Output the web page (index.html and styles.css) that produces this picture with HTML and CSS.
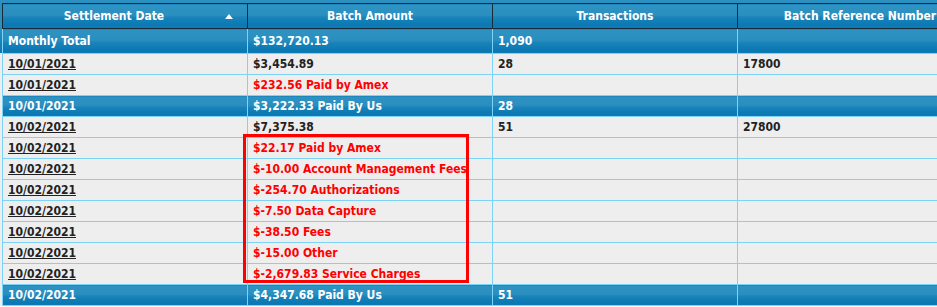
FILE: index.html
```html
<!DOCTYPE html>
<html>
<head>
<meta charset="utf-8">
<link rel="stylesheet" href="styles.css">
</head>
<body>
<div class="wrap">
  <table class="grid">
    <colgroup>
      <col class="c"><col class="c"><col class="c"><col class="c">
    </colgroup>
    <thead>
      <tr>
        <th class="sorted">Settlement Date<span class="arrow"></span></th>
        <th>Batch Amount</th>
        <th>Transactions</th>
        <th>Batch Reference Number</th>
      </tr>
    </thead>
    <tbody>
      <tr class="total big"><td>Monthly Total</td><td>$132,720.13</td><td>1,090</td><td></td></tr>
      <tr><td><a href="#">10/01/2021</a></td><td>$3,454.89</td><td>28</td><td>17800</td></tr>
      <tr><td><a href="#">10/01/2021</a></td><td class="red">$232.56 Paid by Amex</td><td></td><td></td></tr>
      <tr class="total"><td><a href="#">10/01/2021</a></td><td>$3,222.33 Paid By Us</td><td>28</td><td></td></tr>
      <tr><td><a href="#">10/02/2021</a></td><td>$7,375.38</td><td>51</td><td>27800</td></tr>
      <tr><td><a href="#">10/02/2021</a></td><td class="red">$22.17 Paid by Amex</td><td></td><td></td></tr>
      <tr><td><a href="#">10/02/2021</a></td><td class="red">$-10.00 Account Management Fees</td><td></td><td></td></tr>
      <tr><td><a href="#">10/02/2021</a></td><td class="red">$-254.70 Authorizations</td><td></td><td></td></tr>
      <tr><td><a href="#">10/02/2021</a></td><td class="red">$-7.50 Data Capture</td><td></td><td></td></tr>
      <tr><td><a href="#">10/02/2021</a></td><td class="red">$-38.50 Fees</td><td></td><td></td></tr>
      <tr><td><a href="#">10/02/2021</a></td><td class="red">$-15.00 Other</td><td></td><td></td></tr>
      <tr><td><a href="#">10/02/2021</a></td><td class="red">$-2,679.83 Service Charges</td><td></td><td></td></tr>
      <tr class="total"><td><a href="#">10/02/2021</a></td><td>$4,347.68 Paid By Us</td><td>51</td><td></td></tr>
    </tbody>
  </table>
  <div class="highlight"></div>
</div>
</body>
</html>
```

FILE: styles.css
```css
html, body {
  margin: 0;
  padding: 0;
  overflow: hidden;
  background: #ffffff;
}

.wrap {
  position: relative;
  padding-top: 3px;
  padding-left: 2px;
  width: 990px;
  background: linear-gradient(to bottom, #2b8fc0 0, #2b8fc0 29px, #2b8fc0 29px, #0a78b3 53px, #eeeeee 53px);
}

.grid {
  border-collapse: collapse;
  table-layout: fixed;
  width: 980px;
  font-family: "DejaVu Sans Condensed", "DejaVu Sans", Verdana, sans-serif;
  font-stretch: condensed;
  font-size: 12px;
  font-weight: bold;
  color: #222222;
}

.grid col.c {
  width: 245px;
}

.grid th {
  position: relative;
  height: 24px;
  padding: 0 4px;
  border: 1px solid #1b2a38;
  color: #ffffff;
  font-weight: bold;
  text-align: center;
  background: linear-gradient(to bottom, #2f93c3 0%, #2a8ebf 46%, #1883ba 54%, #0b78b3 88%, #0f7db7 100%);
}

.grid th.sorted {
  padding-right: 26px;
}

.arrow {
  position: absolute;
  right: 14px;
  top: 10px;
  width: 0;
  height: 0;
  border-left: 4px solid transparent;
  border-right: 4px solid transparent;
  border-bottom: 5px solid #ffffff;
}

.grid td {
  height: 20px;
  padding: 0 5px;
  border: 1px solid #7dd3f5;
  background: #eeeeee;
  white-space: nowrap;
  overflow: hidden;
}

.grid tbody tr:first-child td {
  border-top: none;
}

.grid tr.big td {
  height: 24px;
}

.grid tr.total td {
  color: #ffffff;
  background: linear-gradient(to bottom, #2e92c2 0%, #2a8ebf 45%, #1883ba 55%, #0a77b2 90%, #0e7cb6 100%);
}

.grid tr.total td a {
  color: #ffffff;
  text-decoration: none;
}

.grid td a {
  color: #222222;
  text-decoration: underline;
}

.grid td.red {
  color: #ff0000;
}

.highlight {
  position: absolute;
  left: 243px;
  top: 134px;
  width: 220px;
  height: 143px;
  border: 3px solid #ff0000;
  pointer-events: none;
}
```
